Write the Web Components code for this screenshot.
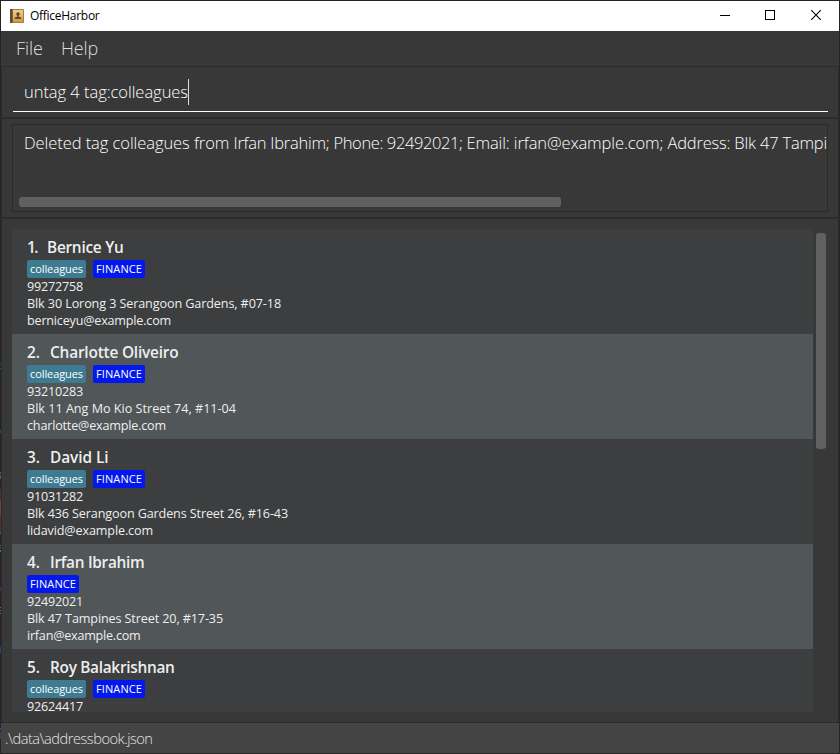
<!DOCTYPE html>
<html lang="en"><head><meta charset="utf-8"><title>OfficeHarbor</title>
<style>
html,body{margin:0;height:100%;overflow:hidden;background:#383838}
</style></head><body>
<office-window></office-window>
<script>
// Single line of text, tracked so that it spans the given width.
customElements.define('fit-text', class extends HTMLElement {
  connectedCallback() {
    this.attachShadow({mode:'open'}).innerHTML = `<style>:host{display:block;white-space:pre;flex:none}span{display:inline-block}</style><span><slot></slot></span>`;
    const span = this.shadowRoot.querySelector('span');
    const want = +this.getAttribute('w');
    const have = span.getBoundingClientRect().width;
    if (want && have) span.style.letterSpacing = ((want - have) / this.textContent.length) + 'px';
  }
});

customElements.define('title-bar', class extends HTMLElement {
  connectedCallback() {
    this.attachShadow({mode:'open'}).innerHTML = `<style>
    :host{display:flex;align-items:center;height:30px;background:#fff;color:#000;box-sizing:border-box;padding-left:8px;font:12px/30px "Open Sans","Noto Sans",sans-serif}
    .app{margin-right:6px;flex:none}
    .controls{margin-left:auto;display:flex}
    .controls svg{width:46px;height:30px;display:block}
    .controls svg:last-child{width:44px}
    </style>
    <svg class="app" width="15" height="14" viewBox="0 0 15 14">
      <defs><linearGradient id="g" x1="0" y1="0" x2="0" y2="1"><stop offset="0" stop-color="#ecd08e"/><stop offset="1" stop-color="#d39a43"/></linearGradient></defs>
      <rect x="1" width="14" height="14" rx="1" fill="#a77b3b"/><rect x="4" y="1" width="10" height="12" fill="url(#g)"/>
      <rect x="1" width="2.5" height="14" rx=".7" fill="#5c4b38"/>
      <circle cx="9" cy="5" r="1.8" fill="#60482c"/><path d="M8.3 6h1.4v1.7l2.5.8V10H5.8V8.5l2.5-.8z" fill="#60482c"/>
    </svg>
    <fit-text w="69.5">OfficeHarbor</fit-text>
    <div class="controls">
      <svg viewBox="0 0 46 30" shape-rendering="crispEdges"><path d="M17 14h10v1H17z"/></svg>
      <svg viewBox="0 0 46 30"><rect x="16.5" y="9.5" width="9" height="9" fill="none" stroke="#000"/></svg>
      <svg viewBox="0 0 44 30"><path d="M16.2 9.2l9.6 9.6M25.8 9.2l-9.6 9.6" stroke="#000" stroke-width="1.1"/></svg>
    </div>`;
  }
});

customElements.define('menu-strip', class extends HTMLElement {
  connectedCallback() {
    this.attachShadow({mode:'open'}).innerHTML = `<style>
    :host{display:flex;gap:18px;height:35px;padding-left:15px;background:#383838;color:#dedede;font:300 18px/35px "Open Sans","Noto Sans",sans-serif}
    </style><fit-text w="27">File</fit-text><fit-text w="37">Help</fit-text>`;
  }
});

customElements.define('command-box', class extends HTMLElement {
  connectedCallback() {
    this.attachShadow({mode:'open'}).innerHTML = `<style>
    :host{display:block;height:50px;box-sizing:border-box;padding:7px 10px 0 11px}
    .field{display:flex;align-items:flex-start;height:37px;border-bottom:1px solid #fff;padding-left:11px;font:300 16.5px/35px "Open Sans","Noto Sans",sans-serif;color:#fff}
    i{width:1px;height:26px;margin-top:5px;background:#ddd}
    </style><div class="field"><fit-text w="164">untag 4 tag:colleagues</fit-text><i></i></div>`;
  }
});

customElements.define('result-display', class extends HTMLElement {
  connectedCallback() {
    this.attachShadow({mode:'open'}).innerHTML = `<style>
    :host{display:block;height:98px;box-sizing:border-box;padding:5px 10px 5px}
    .box{height:88px;box-sizing:border-box;border:1px solid #2b2b2b;display:flex;flex-direction:column;justify-content:space-between;overflow:hidden;color:#fff;font:300 16.5px/36px "Open Sans","Noto Sans",sans-serif}
    .message{display:flex;margin-left:11px}
    .bar{width:542px;height:10px;border-radius:3px;background:#606060;margin:0 0 4px 6px}
    </style><div class="box"><div class="message"><fit-text w="209.5">Deleted tag colleagues from </fit-text><fit-text w="100">Irfan Ibrahim; </fit-text><fit-text w="133">Phone: 92492021; </fit-text><fit-text w="201">Email: irfan@example.com; </fit-text><fit-text w="159.5">Address: Blk 47 Tampi</fit-text></div><div class="bar"></div></div>`;
  }
});

customElements.define('tag-chip', class extends HTMLElement {
  connectedCallback() {
    const team = this.getAttribute('kind') === 'team';
    this.attachShadow({mode:'open'}).innerHTML = `<style>
    :host{display:block;height:18px;box-sizing:border-box;padding:0 3px;border-radius:2px;background:${team ? '#0318ec' : '#3e7b91'};color:#fff;font:11px/17px "Open Sans","Noto Sans",sans-serif}
    </style><fit-text w="${team ? 46 : 53}">${team ? 'FINANCE' : 'colleagues'}</fit-text>`;
  }
});

const people = [
  ['Bernice Yu', 76.5, '99272758', 'Blk 30 Lorong 3 Serangoon Gardens, #07-18', 254, 'berniceyu@example.com', 144, 1],
  ['Charlotte Oliveiro', 128.5, '93210283', 'Blk 11 Ang Mo Kio Street 74, #11-04', 209, 'charlotte@example.com', 139, 1],
  ['David Li', 58.5, '91031282', 'Blk 436 Serangoon Gardens Street 26, #16-43', 261, 'lidavid@example.com', 126, 1],
  ['Irfan Ibrahim', 94.5, '92492021', 'Blk 47 Tampines Street 20, #17-35', 196, 'irfan@example.com', 113.5, 0],
  ['Roy Balakrishnan', 124.5, '92624417', '', 0, '', 0, 1]
];

customElements.define('person-card', class extends HTMLElement {
  connectedCallback() {
    const i = +this.getAttribute('index');
    const [name, nameW, phone, address, addressW, email, emailW, both] = people[i];
    this.attachShadow({mode:'open'}).innerHTML = `<style>
    :host{display:block;flex:none;height:105px;box-sizing:border-box;padding:5px 15px;background:${i % 2 ? '#515658' : '#3c3e3f'};color:#eee;font:12.6px/17px "Open Sans","Noto Sans",sans-serif}
    .name{display:flex;gap:10px;height:26px;font-weight:600;font-size:15.4px;line-height:28px}
    .tags{display:flex;gap:7px;height:18px}
    </style>
    <div class="name"><fit-text w="${i ? 13 : 10}">${i + 1}.</fit-text><fit-text w="${nameW}">${name}</fit-text></div>
    <div class="tags">${both ? '<tag-chip></tag-chip>' : ''}<tag-chip kind="team"></tag-chip></div>
    <div class="lines"><fit-text w="56">${phone}</fit-text>${address ? `<fit-text w="${addressW}">${address}</fit-text><fit-text w="${emailW}">${email}</fit-text>` : ''}</div>`;
  }
});

customElements.define('person-list', class extends HTMLElement {
  connectedCallback() {
    this.attachShadow({mode:'open'}).innerHTML = `<style>
    :host{display:flex;gap:3px;height:503px;box-sizing:border-box;padding:10px 12px 10px 10px}
    .list{width:801px;overflow:hidden;display:flex;flex-direction:column}
    .bar{width:10px;height:216px;margin-top:4px;border-radius:3px;background:#606060}
    </style><div class="list">${people.map((_, i) => `<person-card index="${i}"></person-card>`).join('')}</div><div class="bar"></div>`;
  }
});

customElements.define('status-bar', class extends HTMLElement {
  connectedCallback() {
    this.attachShadow({mode:'open'}).innerHTML = `<style>
    :host{display:block;height:31px;box-sizing:border-box;border-top:1px solid #2b2b2b;background:#444;color:#e4e4e4;padding-left:4px;font:300 14.6px/31px "Open Sans","Noto Sans",sans-serif}
    </style><fit-text w="147.5">.\\data\\addressbook.json</fit-text>`;
  }
});

// Coloured flecks of the desktop along the translucent left window edge: [top, bottom, colour].
const flecks = [[363,364,'#256044'],[368,369,'#1d6a47'],[430,433,'#344a5a'],[472,474,'#5a5a55'],[475,479,'#4b5c6b'],
  [489,500,'#5a2a2b'],[500,512,'#70442f'],[512,515,'#5c4940'],[515,532,'#5f2a2e'],[532,534,'#3c5872'],
  [545,546,'#6a6860'],[547,549,'#2d4276'],[550,552,'#5f6870'],[587,591,'#3b3270'],
  [607,608,'#5c6880'],[610,611,'#596585'],[613,614,'#606c88'],[647,653,'#2e437a'],[728,730,'#34477a'],[732,739,'#2b4173']];

customElements.define('office-window', class extends HTMLElement {
  connectedCallback() {
    const stops = flecks.map(([a, b, c]) => `#262425 ${a - 1}px,${c} ${a - 1}px,${c} ${b - 1}px,#262425 ${b - 1}px`).join(',');
    this.attachShadow({mode:'open'}).innerHTML = `<style>
    :host{display:flex;flex-direction:column;width:840px;height:754px;box-sizing:border-box;border:1px solid #262425;border-left:0;padding-left:1px;background:linear-gradient(${stops}) 0 0/1px 752px no-repeat #383838}
    .panes{display:flex;flex-direction:column;gap:2px;background:#2b2b2b;padding:1px 1px 0}
    .panes>*{background:#383838}
    </style>
    <title-bar></title-bar><menu-strip></menu-strip>
    <div class="panes"><command-box></command-box><result-display></result-display><person-list></person-list></div>
    <status-bar></status-bar>`;
  }
});
</script></body></html>
